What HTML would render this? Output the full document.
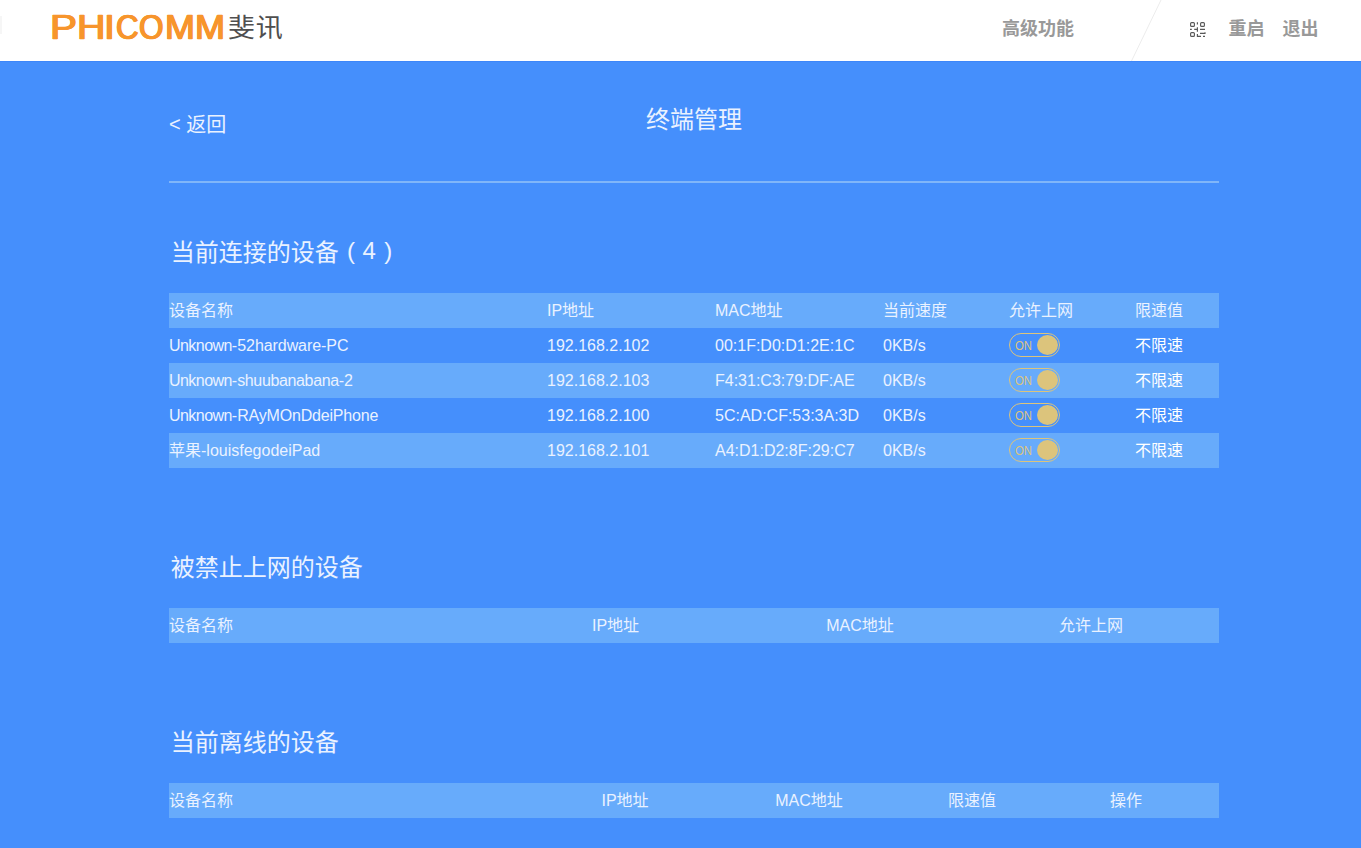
<!DOCTYPE html>
<html lang="zh-CN">
<head>
<meta charset="utf-8">
<title>终端管理</title>
<style>
html,body{margin:0;padding:0;}
body{width:1361px;height:848px;overflow:hidden;background:#458ffc;position:relative;
  font-family:"Liberation Sans","Noto Sans CJK SC",sans-serif;color:#eaf2ff;}
.abs{position:absolute;white-space:nowrap;}
#hdr{position:absolute;left:0;top:0;width:1361px;height:61px;background:#fff;overflow:hidden;}
#hline{position:absolute;left:0;top:61px;width:1361px;height:1px;background:#3d86f9;}
.nav{position:absolute;top:16px;height:27px;line-height:27px;font-size:18px;font-weight:bold;color:#999;white-space:nowrap;}
.logo-en{position:absolute;left:0;top:0;font-family:"Liberation Sans",sans-serif;font-size:35px;line-height:35px;color:#f7952c;-webkit-text-stroke:0.7px #f7952c;text-shadow:0.7px 0 0 #f7952c,-0.7px 0 0 #f7952c;}
.logo-en span{position:absolute;top:9.4px;transform-origin:0 50%;}
.logo-cn{position:absolute;left:228px;top:7.5px;font-size:27px;line-height:38px;color:#4f4f4f;font-weight:400;letter-spacing:.8px;transform:scaleY(.95);font-family:"Noto Sans CJK SC",sans-serif;}
.back{left:169px;top:110px;font-size:20px;line-height:30px;}
.title{left:169px;width:1050px;text-align:center;top:102px;font-size:24px;line-height:36px;}
.divider{position:absolute;left:169px;top:181px;width:1050px;height:2px;background:#80b6f9;}
.sec{left:170.7px;font-size:24px;line-height:36px;}
.row{position:absolute;left:169px;width:1050px;height:35px;line-height:35px;font-size:16px;}
.row.l{background:#67abfb;}
.row span{position:absolute;top:0;white-space:nowrap;}
.row span.c{transform:translateX(-50%);}
.w{color:#fff;}
.pn{position:relative;top:-2px;}
.row em{font-style:normal;letter-spacing:-.55px;}
.row u{text-decoration:none;}
.tg{position:absolute;left:840px;top:5px;width:49px;height:22px;border:1px solid #dcc47c;border-radius:12px;}
.tg i{position:absolute;left:5px;top:0;line-height:23px;font-size:13px;font-style:normal;color:#dcc47c;transform:scaleX(.87);transform-origin:0 50%;}
.tg b{position:absolute;left:26.5px;top:1px;width:21px;height:20px;border-radius:50%;background:#dcc47c;}
</style>
</head>
<body>
<div id="hdr">
  <div style="position:absolute;left:0;top:16px;width:2px;height:18px;background:#f6f6f6"></div>
  <div class="logo-en"><span style="left:49.79px;transform:scaleX(1.158)">P</span><span style="left:76.65px;transform:scaleX(1.127)">H</span><span style="left:104.46px;transform:scaleX(1.119)">I</span><span style="left:115.65px;transform:scaleX(0.894)">C</span><span style="left:138.85px;transform:scaleX(0.900)">O</span><span style="left:165.23px;transform:scaleX(1.027)">M</span><span style="left:194.82px;transform:scaleX(1.031)">M</span></div>
  <div class="logo-cn">斐讯</div>
  <div class="nav" style="left:1002px">高级功能</div>
  <svg style="position:absolute;left:1120px;top:0" width="60" height="61" viewBox="0 0 60 61"><line x1="41" y1="0" x2="11.5" y2="61" stroke="#ececec" stroke-width="1"/></svg>
  <svg style="position:absolute;left:1189px;top:21px" width="18" height="18" viewBox="0 0 18 18" fill="none" stroke="#585858" stroke-width="1.15">
    <rect x="1.6" y="1.6" width="3.8" height="3.8" rx="1"/>
    <rect x="11.6" y="1.6" width="3.8" height="3.8" rx="1"/>
    <rect x="1.6" y="11.6" width="3.8" height="3.8" rx="1"/>
    <path d="M8.4 1.2V3.6M1 8.4H2.8M5.2 8.4H8.4M8.4 6.2V10.8M11 8.4H16M11 12.4H16V11.2M8.4 13V15.4H12M14 15.4H16"/>
  </svg>
  <div class="nav" style="left:1228.5px">重启</div>
  <div class="nav" style="left:1282.5px">退出</div>
</div>
<div id="hline"></div>

<div class="abs back"><span style="position:relative;top:-1.5px">&lt;</span> 返回</div>
<div class="abs title">终端管理</div>
<div class="divider"></div>

<div class="abs sec" style="top:235px">当前连接的设备<span class="pn"> <span style="margin-left:1.7px">(</span> <span style="margin-left:.8px">4</span> <span style="margin-left:1.7px">)</span></span></div>

<div class="row l" style="top:293px"><span style="left:0">设备名称</span><span style="left:378px">IP地址</span><span style="left:546px">MAC地址</span><span style="left:714px">当前速度</span><span style="left:840px">允许上网</span><span style="left:966px">限速值</span></div>
<div class="row" style="top:328px"><span style="left:0"><em>Unknown</em>-52<u style="letter-spacing:-.09px">hardware</u>-PC</span><span style="left:378px">192.168.2.102</span><span style="left:546px">00:1F:D0:D1:2E:1C</span><span style="left:714px">0KB/s</span><div class="tg"><i>ON</i><b></b></div><span class="w" style="left:966px">不限速</span></div>
<div class="row l" style="top:363px"><span style="left:0"><em>Unknown</em>-<u style="letter-spacing:-.36px">shuubanabana</u>-2</span><span style="left:378px">192.168.2.103</span><span style="left:546px">F4:31:C3:79:DF:AE</span><span style="left:714px">0KB/s</span><div class="tg"><i>ON</i><b></b></div><span class="w" style="left:966px">不限速</span></div>
<div class="row" style="top:398px"><span style="left:0"><em>Unknown</em>-<u style="letter-spacing:-.19px">RAyMOnDdeiPhone</u></span><span style="left:378px">192.168.2.100</span><span style="left:546px">5C:AD:CF:53:3A:3D</span><span style="left:714px">0KB/s</span><div class="tg"><i>ON</i><b></b></div><span class="w" style="left:966px">不限速</span></div>
<div class="row l" style="top:433px"><span style="left:0">苹果-louisfegodeiPad</span><span style="left:378px">192.168.2.101</span><span style="left:546px">A4:D1:D2:8F:29:C7</span><span style="left:714px">0KB/s</span><div class="tg"><i>ON</i><b></b></div><span class="w" style="left:966px">不限速</span></div>

<div class="abs sec" style="top:550px">被禁止上网的设备</div>
<div class="row l" style="top:608px"><span style="left:0">设备名称</span><span class="c" style="left:446.5px">IP地址</span><span class="c" style="left:691px">MAC地址</span><span class="c" style="left:922px">允许上网</span></div>

<div class="abs sec" style="top:725px">当前离线的设备</div>
<div class="row l" style="top:783px"><span style="left:0">设备名称</span><span class="c" style="left:456px">IP地址</span><span class="c" style="left:640px">MAC地址</span><span class="c" style="left:803px">限速值</span><span class="c" style="left:957px">操作</span></div>
</body>
</html>
